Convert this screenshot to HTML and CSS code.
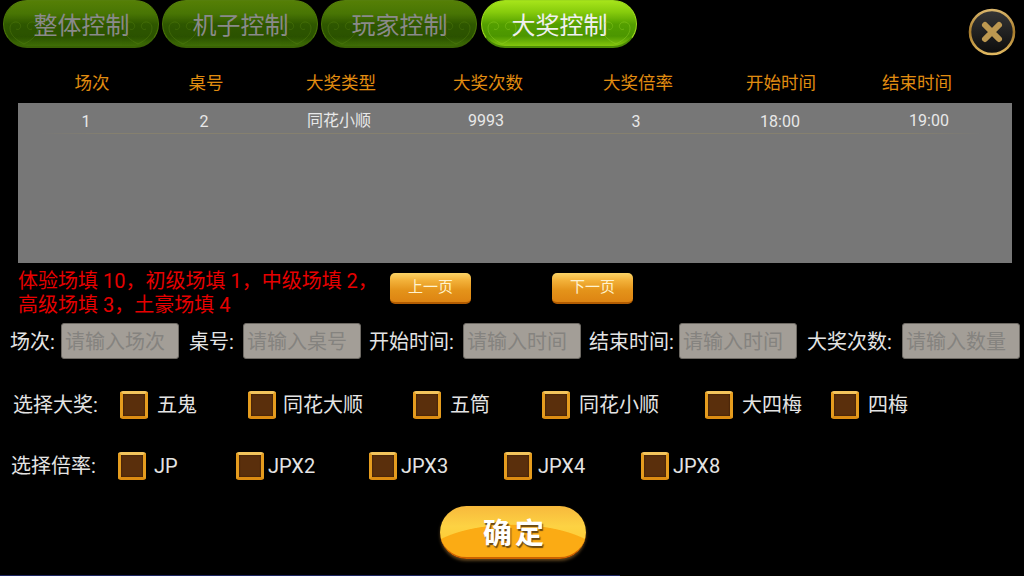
FILE: index.html
```html
<!DOCTYPE html>
<html lang="zh-CN">
<head>
  <meta charset="UTF-8">
  <title>大奖控制</title>
  <link rel="stylesheet" href="styles.css">
</head>
<body>
  <svg class="defs" width="0" height="0">
    <symbol id="swirl" viewBox="0 0 36 30">
      <path d="M18 28C10 24 4 19 4 12C4 6 11 4 14 8C16 11 13 15 10 13M18 28C26 24 32 19 32 12C32 6 25 4 22 8C20 11 23 15 26 13" fill="none" stroke="currentColor" stroke-width="1"/>
    </symbol>
  </svg>

  <div class="top-bar">
    <div class="tabs">
      <div class="tab"><svg class="swirl swirl-left"><use href="#swirl"/></svg><span>整体控制</span><svg class="swirl swirl-right"><use href="#swirl"/></svg></div>
      <div class="tab"><svg class="swirl swirl-left"><use href="#swirl"/></svg><span>机子控制</span><svg class="swirl swirl-right"><use href="#swirl"/></svg></div>
      <div class="tab"><svg class="swirl swirl-left"><use href="#swirl"/></svg><span>玩家控制</span><svg class="swirl swirl-right"><use href="#swirl"/></svg></div>
      <div class="tab active"><svg class="swirl swirl-left"><use href="#swirl"/></svg><span>大奖控制</span><svg class="swirl swirl-right"><use href="#swirl"/></svg></div>
    </div>
    <svg class="close-btn" viewBox="0 0 48 48">
      <defs>
        <linearGradient id="ring" x1="0" y1="0" x2="0" y2="1">
          <stop offset="0" stop-color="#d9b56a"/>
          <stop offset="0.5" stop-color="#a87c2c"/>
          <stop offset="1" stop-color="#e0b860"/>
        </linearGradient>
        <linearGradient id="disc" x1="0" y1="0" x2="0" y2="1">
          <stop offset="0" stop-color="#363636"/>
          <stop offset="1" stop-color="#0c0c0c"/>
        </linearGradient>
      </defs>
      <circle cx="24" cy="24" r="22" fill="url(#disc)" stroke="url(#ring)" stroke-width="2.6"/>
      <path d="M17 17L31 31M31 17L17 31" stroke="#bd9850" stroke-width="6" stroke-linecap="round"/>
    </svg>
  </div>

  <div class="head-row">
    <div>场次</div>
    <div>桌号</div>
    <div>大奖类型</div>
    <div>大奖次数</div>
    <div>大奖倍率</div>
    <div>开始时间</div>
    <div>结束时间</div>
  </div>

  <div class="table">
    <div class="table-row">
      <div>1</div>
      <div>2</div>
      <div class="cell-up">同花小顺</div>
      <div class="cell-up">9993</div>
      <div>3</div>
      <div class="cell-down">18:00</div>
      <div class="cell-up">19:00</div>
    </div>
    <div class="row-line"></div>
  </div>

  <div class="note-row">
    <p class="note">体验场填 10，初级场填 1，中级场填 2，<br>高级场填 3，土豪场填 4</p>
    <div class="page-btn">上一页</div>
    <div class="page-btn next">下一页</div>
  </div>

  <div class="form-row">
    <label class="field">场次:<input type="text" placeholder="请输入场次"></label>
    <label class="field tight">桌号:<input type="text" placeholder="请输入桌号"></label>
    <label class="field tight">开始时间:<input type="text" placeholder="请输入时间"></label>
    <label class="field">结束时间:<input type="text" placeholder="请输入时间"></label>
    <label class="field last">大奖次数:<input type="text" placeholder="请输入数量"></label>
  </div>

  <div class="check-row prize-row">
    <div class="check-label">选择大奖:</div>
    <div class="check-item"><i class="box"></i>五鬼</div>
    <div class="check-item near"><i class="box"></i>同花大顺</div>
    <div class="check-item"><i class="box"></i>五筒</div>
    <div class="check-item"><i class="box"></i>同花小顺</div>
    <div class="check-item"><i class="box"></i>大四梅</div>
    <div class="check-item"><i class="box"></i>四梅</div>
  </div>

  <div class="check-row rate-row">
    <div class="check-label">选择倍率:</div>
    <div class="check-item first"><i class="box"></i>JP</div>
    <div class="check-item"><i class="box"></i>JPX2</div>
    <div class="check-item"><i class="box"></i>JPX3</div>
    <div class="check-item far"><i class="box"></i>JPX4</div>
    <div class="check-item"><i class="box"></i>JPX8</div>
  </div>

  <div class="confirm-row">
    <div class="confirm-btn">确定</div>
  </div>

  <div class="bottom-strip"></div>
</body>
</html>
```

FILE: styles.css
```css
* {
  margin: 0;
  padding: 0;
  box-sizing: border-box;
}
html, body {
  height: 576px;
  overflow: hidden;
}
body {
  position: relative;
  background: #000;
  color: #e4e4e4;
  font-family: Roboto, "Noto Sans CJK SC", sans-serif;
  font-size: 20px;
}
.defs {
  position: absolute;
}

/* top tabs */
.top-bar {
  display: flex;
  justify-content: space-between;
  height: 58px;
  padding: 0 8px 0 3px;
}
.tabs {
  display: flex;
  gap: 3px;
  height: 48px;
}
.tab {
  position: relative;
  width: 156px;
  height: 48px;
  display: flex;
  align-items: center;
  justify-content: center;
  padding: 0 0 1px 1px;
  font-size: 24px;
  color: #8a8a8a;
  border-radius: 24px;
  border: 1px solid #4a7606;
  border-top-color: #567f0c;
  border-bottom: 2px solid #3a6205;
  background: linear-gradient(#557f06 0%, #487504 28%, #2f5700 52%, #2b5200 80%, #3f6e06 100%);
  overflow: hidden;
}
.tab.active {
  margin-left: 1px;
  color: #f0f0f0;
  border-color: #9edb1c;
  border-bottom-color: #4c8a06;
  background: linear-gradient(#a6e41a 0%, #86cb0c 25%, #549f00 52%, #4c9600 78%, #84c60e 100%);
}
.tab span {
  position: relative;
}
.swirl {
  position: absolute;
  top: 15px;
  width: 36px;
  height: 30px;
  color: #6d9a1a;
  opacity: 0.25;
}
.tab.active .swirl {
  color: #9fdc30;
  opacity: 0.35;
}
.swirl-left {
  left: 2px;
}
.swirl-right {
  right: 2px;
}
.close-btn {
  width: 48px;
  height: 48px;
  margin-top: 8px;
}

/* table */
.head-row, .table-row {
  display: grid;
  text-align: center;
}
.head-row {
  grid-template-columns: 120px 108px 162px 132px 168px 118px 154px;
  height: 45px;
  padding: 13px 0 0 32px;
  color: #e08c10;
  font-size: 17.5px;
  line-height: 24px;
}
.table {
  height: 160px;
  margin: 0 12px 0 18px;
  background: #777;
}
.table-row {
  grid-template-columns: 116px 120px 150px 144px 156px 132px 166px;
  height: 30px;
  padding-left: 10px;
  font-size: 16px;
  line-height: 37px;
  color: #e8e8e8;
}
.cell-up {
  line-height: 35px;
}
.cell-down {
  line-height: 38px;
}
.row-line {
  height: 1px;
  margin: 0 29px 0 22px;
  background: linear-gradient(90deg, #777, #85806f 8%, #85806f 92%, #777);
}

/* note and paging */
.note-row {
  display: flex;
  height: 60px;
  padding: 6px 0 0 18px;
}
.note {
  width: 372px;
  color: #e60000;
  font-size: 20px;
  line-height: 24px;
  white-space: nowrap;
}
.page-btn {
  width: 81px;
  height: 31px;
  margin-top: 4px;
  border-radius: 5px;
  border-bottom: 2px solid #b25c02;
  background: linear-gradient(#fbd366 0%, #f3b23a 25%, #e4931a 60%, #dd8412 100%);
  color: #fff3cf;
  font-size: 15px;
  line-height: 28px;
  text-align: center;
}
.page-btn.next {
  margin-left: 81px;
}

/* inputs */
.form-row {
  display: grid;
  grid-template-columns: 179px 180px 220px 218px 213px;
  height: 36px;
  padding-left: 10px;
  color: #e4e4e4;
  line-height: 39px;
}
.field {
  display: flex;
  justify-content: space-between;
  padding-right: 10px;
}
.field.tight {
  padding-right: 8px;
}
.field.last {
  padding-right: 0;
}
.field input {
  width: 118px;
  height: 36px;
  padding: 2px 3px 0;
  border: 1px solid #6e6a64;
  border-radius: 3px;
  background: #a39e97;
  font-family: Roboto, "Noto Sans CJK SC", sans-serif;
  font-size: 20px;
}
.field input::placeholder {
  color: #85837f;
  opacity: 1;
}

/* checkboxes */
.check-row {
  display: grid;
  height: 28px;
  line-height: 28px;
}
.prize-row {
  grid-template-columns: 107px 128px 165px 129px 163px 126px 100px;
  margin-top: 32px;
  padding-left: 13px;
}
.rate-row {
  grid-template-columns: 107px 118px 133px 135px 137px 100px;
  margin-top: 33px;
  padding-left: 11px;
}
.check-item {
  display: flex;
  gap: 9px;
}
.check-item.near {
  gap: 7px;
}
.rate-row .check-item {
  gap: 4px;
}
.rate-row .check-item.first {
  gap: 8px;
}
.rate-row .check-item.far {
  gap: 6px;
}
.box {
  flex: none;
  width: 28px;
  height: 28px;
  border: 3px solid #e59c1e;
  border-top-color: #f3c45c;
  border-bottom-color: #dc8c12;
  border-radius: 3px;
  background: #5a2f0c;
  box-shadow: inset 0 0 2px #2c1404;
}

/* confirm */
.confirm-row {
  display: flex;
  justify-content: center;
  margin-top: 26px;
  padding-left: 2px;
}
.confirm-btn {
  width: 146px;
  height: 53px;
  padding-left: 4px;
  border-radius: 27px;
  border-bottom: 2px solid #cc6200;
  background:
    radial-gradient(ellipse 65% 79% at 50% 115%, #fbab14 0%, #fbab14 98%, transparent 100%),
    linear-gradient(#f7b93c 0%, #fdd243 40%, #fdc72a 100%);
  box-shadow: 0 2px 3px rgba(150, 110, 50, 0.6);
  color: #fff;
  font-size: 29px;
  font-weight: 700;
  letter-spacing: 3px;
  line-height: 56px;
  text-align: center;
  text-shadow: 1px 2px 1px #6b4a12;
}

.bottom-strip {
  position: absolute;
  left: 0;
  bottom: 0;
  width: 620px;
  height: 1px;
  background: #1c2560;
}
```
